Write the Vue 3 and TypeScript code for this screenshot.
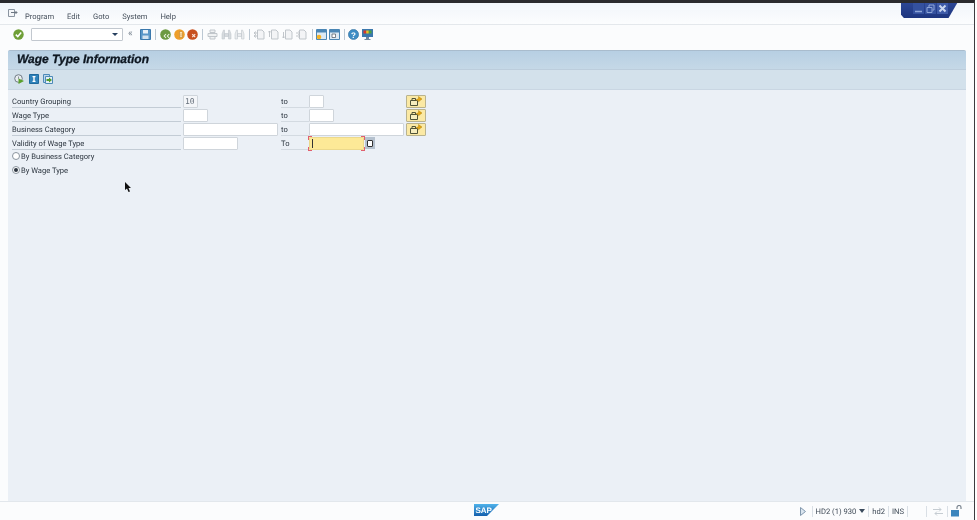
<script setup lang="ts">
const menus = ['Program', 'Edit', 'Goto', 'System', 'Help']

const rows = [
  { label: 'Country Grouping', from: '10', fromWidth: 15, to: 'to', toWidth: 15, more: true },
  { label: 'Wage Type', from: '', fromWidth: 25, to: 'to', toWidth: 25, more: true },
  { label: 'Business Category', from: '', fromWidth: 95, to: 'to', toWidth: 95, more: true },
  { label: 'Validity of Wage Type', from: '', fromWidth: 55, to: 'To', toWidth: 55, more: false },
]

// arrows of the four paging buttons: first, previous, next, last
const pageArrows = [
  'M0 4h4M2 2.500L0 4l2 1.500M0 7h4M2 5.500L0 7l2 1.500',
  'M1.500 8V2M0 3.500L1.500 2 3 3.500',
  'M1.500 3v6M0 7.500L1.500 9 3 7.500',
  'M0 4h4M2.500 2.500L4 4 2.500 5.500M0 7h4M2.500 5.500L4 7 2.500 8.500',
]
</script>

<template>
  <div class="screen">
    <div class="window-tab">
      <span class="win-btn">
        <svg width="8" height="9" viewBox="0 0 8 9"><path d="M0 7.500h7" stroke="#8fa6d8" stroke-width="1.500" /></svg>
      </span>
      <span class="win-btn">
        <svg width="9" height="9" viewBox="0 0 9 9"><path d="M1 3.500h5v5H1zM3 3V1h5v5H6.500" fill="none" stroke="#8fa6d8" /></svg>
      </span>
      <span class="win-btn win-close">
        <svg width="9" height="9" viewBox="0 0 9 9"><path d="M1.500 1.500l6 6M7.500 1.500l-6 6" stroke="#c9d6f0" stroke-width="2" /></svg>
      </span>
    </div>

    <header class="menubar">
      <svg class="menu-icon" width="10" height="8" viewBox="0 0 10 8">
        <path d="M.5.500h6v7h-6z" fill="#f4f6f9" stroke="#8a94a0" />
        <path d="M3 3.500h6M7.500 2L9 3.500 7.500 5" fill="none" stroke="#6d7783" />
      </svg>
      <span v-for="m in menus" :key="m" class="menu-item">{{ m }}</span>
    </header>

    <div class="toolbar">
      <svg class="ok" width="11" height="11" viewBox="0 0 11 11">
        <circle cx="5.500" cy="5.500" r="5.200" fill="#6f9f37" />
        <path d="M2.800 5.600l2 2 3.400-4" fill="none" stroke="#fff" stroke-width="1.500" />
      </svg>
      <div class="command">
        <svg width="6" height="3" viewBox="0 0 6 3"><path d="M0 0h6L3 3z" fill="#27405f" /></svg>
      </div>
      <span class="chevrons">«</span>
      <svg class="tool" width="11" height="11" viewBox="0 0 11 11">
        <path d="M.5.500h10v10H.5z" fill="#5a97c8" stroke="#3a78ac" />
        <path d="M3 1h5v3.500H3z" fill="#e8f1f8" />
        <path d="M2.500 6.500h6V10h-6z" fill="#d3e3f0" />
      </svg>
      <i class="sep"></i>
      <svg class="tool" width="11" height="11" viewBox="0 0 11 11">
        <circle cx="5.500" cy="5.500" r="5.300" fill="#6c9a42" />
        <path d="M6 5L4.200 7 6 9M9.200 5L7.400 7l1.800 2" fill="none" stroke="#eef6e4" stroke-width="1.100" />
      </svg>
      <svg class="tool" width="11" height="11" viewBox="0 0 11 11">
        <circle cx="5.500" cy="5.500" r="5.300" fill="#ee9f2a" />
        <path d="M5.500 2.500h2l1 1v5h-3z" fill="#fde2b2" stroke="#b9761a" stroke-width=".5" />
        <path d="M6.300 5h1.400M6.300 6.800h1.400" stroke="#b9761a" stroke-width=".6" />
      </svg>
      <svg class="tool" width="11" height="11" viewBox="0 0 11 11">
        <circle cx="5.500" cy="5.500" r="5.300" fill="#c8501f" />
        <path d="M5.200 5.200l3 3M8.200 5.200l-3 3" stroke="#fbe5dc" stroke-width="1.200" />
      </svg>
      <i class="sep"></i>
      <svg class="tool dim" width="11" height="11" viewBox="0 0 11 11">
        <path d="M3 1h5v2.500H3zM1 4.500h9v3H1zM3 7.500h5V10H3z" fill="#eceef0" stroke="#a9b0b7" />
      </svg>
      <svg class="tool dim" width="11" height="11" viewBox="0 0 11 11">
        <path d="M1 10V5l1.500-4h1v9zM10 10V5L8.500 1h-1v9zM3.500 4.500h4v3h-4z" fill="#c9ced3" stroke="#aab1b8" stroke-width=".6" />
      </svg>
      <svg class="tool dim" width="11" height="11" viewBox="0 0 11 11">
        <path d="M1 10V5l1.500-4h1v9zM10 10V5L8.500 1h-1v9zM3.500 4.500h4v3h-4z" fill="#e2e5e8" stroke="#aab1b8" stroke-width=".6" />
      </svg>
      <i class="sep"></i>
      <svg v-for="(arrow, n) in pageArrows" :key="n" class="tool dim page-tool" width="11" height="11" viewBox="0 0 11 11">
        <path d="M3.500 1H8l2 2v7H3.500z" fill="#f0f2f4" stroke="#a9b0b7" />
        <path :d="arrow" fill="none" stroke="#a0a7ae" stroke-width=".9" />
      </svg>
      <i class="sep sep-tight"></i>
      <svg class="tool" width="11" height="11" viewBox="0 0 11 11">
        <path d="M.5.500h10v10H.5z" fill="#dce9f3" stroke="#4a86b5" />
        <path d="M1 1h9v2.500H1z" fill="#4a86b5" />
        <circle cx="3" cy="8" r="2.300" fill="#f5b325" />
      </svg>
      <svg class="tool" width="11" height="11" viewBox="0 0 11 11">
        <path d="M.5.500h10v10H.5z" fill="#dce9f3" stroke="#4a86b5" />
        <path d="M1 1h9v2.500H1z" fill="#4a86b5" />
        <path d="M3 5h3.500v3.500H3z" fill="#fff" stroke="#5c6670" stroke-width=".8" />
      </svg>
      <i class="sep sep-tight"></i>
      <svg class="tool" width="11" height="11" viewBox="0 0 11 11">
        <circle cx="5.500" cy="5.500" r="5.100" fill="#3d8cc4" stroke="#2d6c9c" stroke-width=".6" />
        <text x="5.500" y="8.500" text-anchor="middle" font-size="8" font-weight="700" fill="#fff" font-family="Liberation Sans">?</text>
      </svg>
      <svg class="tool" width="11" height="11" viewBox="0 0 11 11">
        <path d="M0 0h11v8H0z" fill="#3b78ad" />
        <path d="M1.500 1.500h2.700v3H1.500z" fill="#d8382b" /><path d="M4.200 1.500h2.600v3H4.200z" fill="#f0c020" /><path d="M6.800 1.500h2.700v3H6.800z" fill="#4ba341" />
        <path d="M4 8h3v2H4zM2.500 10h6v1h-6z" fill="#6d87a0" />
      </svg>
    </div>

    <main class="panel">
      <h1 class="title">Wage Type Information</h1>
      <div class="app-toolbar">
        <svg width="10" height="10" viewBox="0 0 10 10">
          <circle cx="4.500" cy="4.500" r="3.800" fill="#e8edf0" stroke="#717c86" />
          <path d="M4.500 2.500v2l1 .8" fill="none" stroke="#717c86" stroke-width=".8" />
          <path d="M4.500 4.500L10 7 4.500 10z" fill="#5aa02c" />
        </svg>
        <svg width="10" height="10" viewBox="0 0 10 10">
          <path d="M.5.500h9v9h-9z" fill="#2f82ba" stroke="#1f6a9e" />
          <path d="M3.500 2h3v1.200h-.8v3.600h.8V8h-3V6.800h.8V3.200h-.8z" fill="#fff" />
        </svg>
        <svg width="10" height="10" viewBox="0 0 10 10">
          <path d="M.5.500h6v8h-6z" fill="#bcd6ea" stroke="#4c8ab8" />
          <path d="M2.500 2.500h7v7h-7z" fill="#e3eef6" stroke="#4c8ab8" />
          <path d="M3.500 5h2.500V3.500L9 6 6 8.500V7H3.500z" fill="#4f9a2c" />
        </svg>
      </div>

      <section class="form">
        <div v-for="row in rows" :key="row.label" class="row">
          <label class="label">{{ row.label }}</label>
          <div class="from-cell">
            <span class="field" :class="{ 'field-prefilled': row.from }" :style="{ width: row.fromWidth + 'px' }">{{ row.from }}</span>
          </div>
          <span class="to-label">{{ row.to }}</span>
          <div class="to-cell">
            <span v-if="row.more" class="field" :style="{ width: row.toWidth + 'px' }"></span>
            <template v-else>
              <span class="field field-active" :style="{ width: row.toWidth + 'px' }">
                <i class="caret"></i>
                <i class="corner corner-tl"></i>
                <i class="corner corner-tr"></i>
                <i class="corner corner-bl"></i>
                <i class="corner corner-br"></i>
              </span>
              <span class="calendar"><i></i></span>
            </template>
          </div>
          <button v-if="row.more" class="more" type="button">
            <svg width="12" height="10" viewBox="0 0 12 10">
              <path d="M.5 4.500h7v5h-7z" fill="#f6edbd" stroke="#4f5338" />
              <path d="M2 4.500V2.500h3.500v2" fill="none" stroke="#4f5338" />
              <path d="M6 4l2.500-1.500V.5L12 3 8.500 5.800V4.500z" fill="#e3a613" stroke="#a97a0a" stroke-width=".4" />
            </svg>
          </button>
        </div>

        <div class="radio-row radio-first"><i class="radio"></i><span>By Business Category</span></div>
        <div class="radio-row"><i class="radio radio-on"></i><span>By Wage Type</span></div>
      </section>

      <svg class="cursor" width="6" height="10" viewBox="0 0 6 10">
        <path d="M0 0v8l2-1.500L3.500 10 5 9.400 3.500 6H6z" fill="#111" />
      </svg>
    </main>

    <footer class="statusbar">
      <svg class="sap" width="25" height="12" viewBox="0 0 25 12">
        <defs>
          <linearGradient id="sapfill" x1="0" y1="0" x2="0" y2="1">
            <stop offset="0" stop-color="#4fb2ea" />
            <stop offset="1" stop-color="#1560ad" />
          </linearGradient>
        </defs>
        <path d="M0 0h25L13 12H0z" fill="url(#sapfill)" />
        <text x="1.500" y="8.600" font-size="8" font-weight="700" fill="#fff" font-family="Liberation Sans">SAP</text>
      </svg>
      <div class="status-right">
        <svg class="status-play" width="6" height="9" viewBox="0 0 6 9"><path d="M.5.500v8L5.500 4.500z" fill="#dbe6f0" stroke="#8298ad" /></svg>
        <i class="status-sep"></i>
        <span>HD2 (1) 930</span>
        <svg width="6" height="4" viewBox="0 0 6 4"><path d="M0 0h6L3 4z" fill="#3a4a5c" /></svg>
        <i class="status-sep"></i>
        <span>hd2</span>
        <i class="status-sep"></i>
        <span>INS</span>
        <i class="status-sep"></i>
        <i class="status-sep status-gap"></i>
        <svg width="12" height="9" viewBox="0 0 12 9">
          <path d="M1 2.500h8M7 .5l2 2-2 2M11 6.500H3M5 4.500l-2 2 2 2" fill="none" stroke="#c5ccd2" />
        </svg>
        <i class="status-sep"></i>
        <svg width="11" height="12" viewBox="0 0 11 12">
          <path d="M6 4V2.500a2 2 0 0 1 4 0V4" fill="none" stroke="#7b8590" stroke-width="1.200" />
          <path d="M0 5h8v6.500H0z" fill="#3c85bd" />
        </svg>
      </div>
    </footer>
  </div>
</template>

<style scoped>
.screen {
  position: relative;
  display: flex;
  flex-direction: column;
  width: 975px;
  height: 520px;
  box-sizing: border-box;
  border-top: 3px solid #2a2a2e;
  border-right: 1px solid #3c3c40;
  background: #fbfcfd;
  font-family: Roboto, "Liberation Sans", sans-serif;
  font-size: 7.600px;
  color: #2d3640;
  text-rendering: geometricPrecision;
  overflow: hidden;
  filter: blur(0.3px);
}

.window-tab {
  position: absolute;
  top: -3px;
  left: 901px;
  display: flex;
  align-items: center;
  gap: 1px;
  width: 58px;
  height: 18px;
  box-sizing: border-box;
  padding: 0 0 2px 12px;
  background: linear-gradient(#2f4a9a, #1d357f);
  clip-path: polygon(0 0, 100% 0, 82% 100%, 5% 100%, 0 82%);
}

.win-btn {
  display: flex;
  align-items: center;
  justify-content: center;
  width: 11px;
  height: 11px;
  background: #34519f;
}

.win-close {
  background: #3d5aa8;
}

.menubar {
  display: flex;
  align-items: center;
  height: 22px;
  box-sizing: border-box;
  padding: 5px 0 0 8px;
  background: linear-gradient(#f1f5fa, #fcfdfe);
  border-bottom: 1px solid #e4e8ec;
}

.menu-icon {
  margin: -7px 7px 0 0;
}

.menu-item {
  margin-right: 13px;
  color: #46505c;
}

.toolbar {
  display: flex;
  align-items: center;
  height: 19px;
  padding-left: 13px;
  background: #fbfcfd;
}

.ok {
  margin-right: 7px;
}

.command {
  display: flex;
  align-items: center;
  justify-content: flex-end;
  width: 92px;
  height: 13px;
  box-sizing: border-box;
  padding-right: 4px;
  background: #fff;
  border: 1px solid #c2c8cf;
  border-radius: 1px;
}

.chevrons {
  width: 6px;
  margin: -2px 6px 0 5px;
  color: #7a8591;
  font-size: 10px;
  line-height: 10px;
}

.tool {
  margin-right: 2.500px;
  flex: none;
}

.dim {
  opacity: 0.7;
}

.page-tool {
  margin-right: 3px;
}

.sep {
  width: 1px;
  height: 11px;
  margin: 0 4px 0 1.500px;
  background: #bcc8d3;
}

.sep-tight {
  margin-right: 3px;
}

.panel {
  position: relative;
  display: flex;
  flex-direction: column;
  flex: 1;
  margin: 6px 8px 0 8px;
  background: #ebf0f6;
  border-top: 1px solid #a9bccd;
  border-radius: 2px 2px 0 0;
  min-height: 0;
}

.title {
  height: 18px;
  margin: 0;
  padding-left: 9px;
  background: linear-gradient(#b7cfe3, #c5d8e7);
  color: #0d1620;
  font-family: "Liberation Sans", sans-serif;
  font-size: 12px;
  font-style: italic;
  font-weight: 700;
  line-height: 16px;
  -webkit-text-stroke: 0.3px #0d1620;
}

.app-toolbar {
  display: flex;
  align-items: center;
  gap: 4.500px;
  height: 21px;
  box-sizing: border-box;
  padding: 0 0 2px 6px;
  background: #d3e1eb;
  border-top: 1px solid #bccddc;
  border-bottom: 1px solid #c9d6e2;
}

.form {
  display: flex;
  flex-direction: column;
  padding: 4px 0 0 4px;
}

.row {
  display: flex;
  align-items: center;
  height: 14px;
}

.label {
  width: 169px;
  height: 13px;
  margin-right: 2px;
  line-height: 15px;
  border-bottom: 1px solid #c3ccd5;
}

.from-cell {
  width: 98px;
  display: flex;
}

.to-label {
  width: 28px;
  height: 13px;
  line-height: 15px;
  border-bottom: 1px solid #d3dae1;
}

.to-cell {
  display: flex;
  align-items: center;
  width: 97px;
}

.field {
  display: block;
  position: relative;
  height: 13px;
  box-sizing: border-box;
  background: #fff;
  border: 1px solid #cfd5db;
  border-radius: 1px;
  font-family: "DejaVu Sans Mono", monospace;
  font-size: 8px;
  line-height: 11px;
}

.field-prefilled {
  padding-left: 1px;
  background: #f4f6f9;
  color: #66707b;
}

.field-active {
  background: #fde997;
  border-color: #ecd98c;
}

.caret {
  position: absolute;
  left: 2px;
  top: 1px;
  width: 1px;
  height: 9px;
  background: #333;
}

.corner {
  position: absolute;
  width: 3px;
  height: 3px;
  border: 0 solid #e0606e;
}

.corner-tl {
  left: -2px;
  top: -2px;
  border-width: 1px 0 0 1px;
}

.corner-tr {
  right: -2px;
  top: -2px;
  border-width: 1px 1px 0 0;
}

.corner-bl {
  left: -2px;
  bottom: -2px;
  border-width: 0 0 1px 1px;
}

.corner-br {
  right: -2px;
  bottom: -2px;
  border-width: 0 1px 1px 0;
}

.calendar {
  display: flex;
  align-items: center;
  justify-content: center;
  width: 10px;
  height: 12px;
  margin-left: 1px;
  background: #b5c1ce;
}

.calendar i {
  width: 4px;
  height: 5px;
  background: #fff;
  border: 1px solid #333;
  border-radius: 1px;
}

.more {
  display: flex;
  align-items: center;
  justify-content: center;
  width: 20px;
  height: 13px;
  padding: 0;
  background: #fbe9a4;
  border: 1px solid #b9b38e;
  border-radius: 1px;
}

.radio-row {
  display: flex;
  align-items: center;
  gap: 1px;
  height: 14px;
}

.radio-first {
  margin-top: -1px;
}

.radio {
  position: relative;
  width: 8px;
  height: 8px;
  box-sizing: border-box;
  background: #fff;
  border: 1px solid #8a949e;
  border-radius: 50%;
}

.radio-on::after {
  content: "";
  position: absolute;
  left: 1px;
  top: 1px;
  width: 4px;
  height: 4px;
  background: #2d3640;
  border-radius: 50%;
}

.cursor {
  position: absolute;
  left: 117px;
  top: 131px;
}

.statusbar {
  position: relative;
  display: flex;
  align-items: center;
  justify-content: flex-end;
  height: 18px;
  background: #fbfcfd;
  border-top: 1px solid #e2e7ec;
}

.sap {
  position: absolute;
  left: 474px;
  top: 2px;
}

.status-right {
  display: flex;
  align-items: center;
  gap: 3px;
  padding-right: 12px;
  color: #3f4a56;
}

.status-play {
  margin-right: 3px;
}

.status-sep {
  width: 1px;
  height: 11px;
  background: #d9dfe5;
}

.status-gap {
  margin-left: 15px;
  margin-right: 2px;
}
</style>

<style>
html, body {
  margin: 0;
  background: #fff;
}
</style>
